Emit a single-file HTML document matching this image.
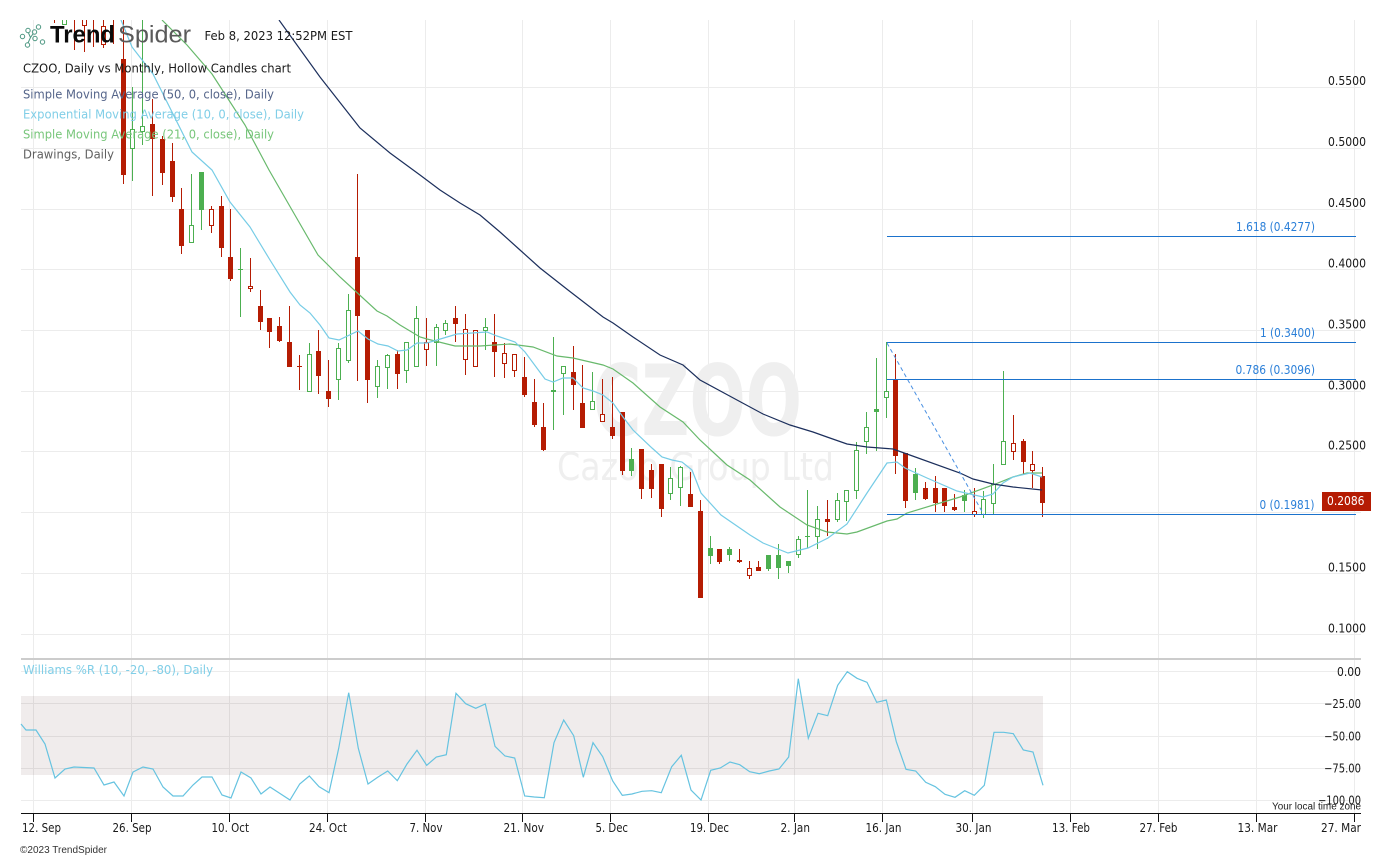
<!DOCTYPE html>
<html><head><meta charset="utf-8"><title>CZOO chart</title>
<style>
html,body{margin:0;padding:0;background:#fff;width:1391px;height:859px;overflow:hidden}
svg{display:block}
text{font-family:"DejaVu Sans","Liberation Sans",sans-serif;font-size:12px}
.ax{fill:#1a1a1a}
.fib{fill:#2a7fd8}
.ls{font-family:"Liberation Sans",sans-serif}
</style></head><body>
<svg width="1391" height="859" viewBox="0 0 1391 859" xmlns="http://www.w3.org/2000/svg">
<defs><clipPath id="c"><rect x="21" y="20" width="1340" height="638"/></clipPath></defs>
<rect width="1391" height="859" fill="#fff"/>
<!-- zone -->
<rect x="21" y="696" width="1022" height="79" fill="#f0ecec"/>
<!-- grid -->
<path fill="none" stroke="#000" stroke-opacity=".075" stroke-width="1" shape-rendering="crispEdges" d="M21 87.5H1361M21 148.5H1361M21 209.5H1361M21 269.5H1361M21 330.5H1361M21 391.5H1361M21 451.5H1361M21 512.5H1361M21 573.5H1361M21 634.5H1361M21 671.5H1361M21 703.5H1361M21 736.5H1361M21 768.5H1361M21 800.5H1361M33.5 20V813M131.5 20V813M229.5 20V813M327.5 20V813M425.5 20V813M522.5 20V813M610.5 20V813M708.5 20V813M794.5 20V813M882.5 20V813M972.5 20V813M1070.5 20V813M1158.5 20V813M1256.5 20V813M1354.5 20V813"/>
<rect x="21" y="658" width="1340" height="2" fill="#ccc"/>
<!-- watermark -->
<text x="593" y="435" fill="#efefef" style="font-size:98px;font-weight:700" textLength="209" lengthAdjust="spacingAndGlyphs">CZOO</text>
<text x="557" y="480" fill="#efefef" style="font-size:38px" textLength="277" lengthAdjust="spacingAndGlyphs">Cazoo Group Ltd</text>
<g clip-path="url(#c)">
<!-- red wicks -->
<path fill="none" stroke="#b51c03" stroke-width="1" shape-rendering="crispEdges" d="M54.5 20V23M74.5 20V50M84.5 20V52M93.5 20V47M103.5 20V48M113.5 20V44M123.5 20V184M152.5 99V196M162.5 136V185M172.5 143V202M181.5 188V254M211.5 206V233M221.5 196V257M230.5 209V281M250.5 258V292M260.5 290V330M269.5 318V348M279.5 317V342M289.5 306V367M299.5 355V390M318.5 330V394M328.5 360V407M357.5 174V381M367.5 330V403M397.5 350V389M426.5 318V366M455.5 306V342M465.5 314V375M494.5 314V377M504.5 343V378M514.5 354V377M524.5 357V397M534.5 379V427M543.5 403V451M573.5 346V410M582.5 365V428M602.5 379V421M612.5 377V439M622.5 412V475M641.5 449V499M651.5 464V498M661.5 464V517M690.5 472V507M700.5 500V598M719.5 549V564M739.5 549V563M749.5 561V579M758.5 561V571M827.5 500V536M895.5 354V474M905.5 453V508M925.5 482V500M935.5 476V512M944.5 488V512M954.5 494V511M974.5 488V517M1013.5 415V460M1023.5 439V474M1032.5 451V488M1042.5 467V517"/>
<!-- green wicks -->
<path fill="none" stroke="#4caf50" stroke-width="1" shape-rendering="crispEdges" d="M64.5 20V25M132.5 87V181M142.5 20V145M191.5 174V242M201.5 172V230M240.5 248V317M309.5 343V391M338.5 343V400M348.5 294V363M377.5 360V398M387.5 354V389M406.5 342V383M416.5 306V366M436.5 324V366M445.5 320V335M485.5 318V350M553.5 337V430M563.5 366V415M592.5 372V409M631.5 448V476M670.5 467V500M680.5 466V506M710.5 536V564M729.5 547V561M768.5 555V571M778.5 544V579M788.5 561V573M798.5 536V558M807.5 490V548M817.5 506V549M837.5 493V522M846.5 490V521M856.5 442V499M866.5 412V454M876.5 358V451M886.5 342V418M915.5 468V500M964.5 490V512M983.5 491V518M993.5 464V514M1003.5 371V464"/>
<!-- red filled -->
<path fill="#b51c03" shape-rendering="crispEdges" d="M121 59h5v116h-5zM150 124h5v15h-5zM160 139h5v34h-5zM170 161h5v36h-5zM179 209h5v37h-5zM219 206h5v42h-5zM228 257h5v22h-5zM258 306h5v16h-5zM267 318h5v14h-5zM277 326h5v15h-5zM287 342h5v25h-5zM297 366h5v1h-5zM316 351h5v25h-5zM326 391h5v8h-5zM355 257h5v59h-5zM365 330h5v50h-5zM395 354h5v20h-5zM453 318h5v6h-5zM492 342h5v10h-5zM522 377h5v18h-5zM532 402h5v23h-5zM541 427h5v23h-5zM571 372h5v13h-5zM580 403h5v25h-5zM610 427h5v9h-5zM620 412h5v59h-5zM639 449h5v40h-5zM649 470h5v19h-5zM659 464h5v45h-5zM688 494h5v13h-5zM698 511h5v87h-5zM717 549h5v13h-5zM737 560h5v2h-5zM756 567h5v4h-5zM825 519h5v3h-5zM893 379h5v77h-5zM903 453h5v48h-5zM923 488h5v11h-5zM933 488h5v15h-5zM942 488h5v18h-5zM952 507h5v3h-5zM1021 441h5v21h-5zM1040 476h5v27h-5z"/>
<!-- green filled -->
<path fill="#4caf50" shape-rendering="crispEdges" d="M199 172h5v38h-5zM238 269h5v1h-5zM551 390h5v2h-5zM629 459h5v12h-5zM708 548h5v8h-5zM727 549h5v6h-5zM766 555h5v14h-5zM776 555h5v13h-5zM786 561h5v5h-5zM805 536h5v1h-5zM874 409h5v3h-5zM913 474h5v19h-5zM962 495h5v6h-5z"/>
<!-- red hollow -->
<path fill="#fff" stroke="#b51c03" stroke-width="1" shape-rendering="crispEdges" d="M82.5 19.5h4v6h-4zM101.5 26.5h4v18h-4zM209.5 209.5h4v16h-4zM248.5 286.5h4v2h-4zM424.5 342.5h4v7h-4zM463.5 329.5h4v30h-4zM473.5 330.5h4v36h-4zM502.5 353.5h4v10h-4zM512.5 354.5h4v16h-4zM600.5 414.5h4v7h-4zM747.5 568.5h4v7h-4zM972.5 511.5h4v3h-4zM1011.5 443.5h4v8h-4zM1030.5 464.5h4v6h-4z"/>
<!-- green hollow -->
<path fill="#fff" stroke="#4caf50" stroke-width="1" shape-rendering="crispEdges" d="M62.5 19.5h4v5h-4zM130.5 129.5h4v19h-4zM140.5 126.5h4v5h-4zM189.5 225.5h4v17h-4zM307.5 354.5h4v37h-4zM336.5 348.5h4v31h-4zM346.5 310.5h4v50h-4zM375.5 366.5h4v20h-4zM385.5 355.5h4v12h-4zM404.5 342.5h4v28h-4zM414.5 318.5h4v48h-4zM434.5 327.5h4v15h-4zM443.5 323.5h4v7h-4zM483.5 327.5h4v3h-4zM561.5 366.5h4v7h-4zM590.5 401.5h4v8h-4zM668.5 478.5h4v15h-4zM678.5 467.5h4v20h-4zM796.5 539.5h4v15h-4zM815.5 519.5h4v17h-4zM835.5 500.5h4v19h-4zM844.5 490.5h4v11h-4zM854.5 450.5h4v40h-4zM864.5 427.5h4v14h-4zM884.5 391.5h4v6h-4zM981.5 499.5h4v15h-4zM991.5 484.5h4v19h-4zM1001.5 441.5h4v23h-4z"/>
<!-- SMA 21 -->
<polyline fill="none" stroke="#68b96c" stroke-width="1.2" points="162,20 187,45 212,74 245,125 269,170 292,210 318,255 340,277 377,311 387,316 400,325 420,337 427,339 455,346 480,346 510,344 533,347 557,356 573,358 603,365 613,369 633,383 660,407 683,422 700,440 727,465 750,480 780,507 807,525 827,532 847,534 857,532 887,521 897,519 907,513 960,497 993,485 1013,477 1027,473 1042,473"/>
<!-- EMA 10 -->
<polyline fill="none" stroke="#76cce6" stroke-width="1.2" points="121,20 132,47 153,74 192,152 212,170 230,202 250,227 270,260 290,292 300,305 310,313 320,325 329,338 339,340 358,331 368,339 378,344 388,346 398,351 407,350 417,343 427,343 437,340 457,334 487,332 497,336 515,342 525,352 545,379 553,382 563,378 573,378 583,388 593,391 603,395 613,403 623,417 633,430 652,448 662,457 672,460 682,462 692,470 701,493 721,515 750,535 763,543 788,553 808,548 828,538 847,524 867,493 887,463 897,462 905,468 927,478 957,491 983,497 993,494 1003,483 1013,477 1030,473 1042,477"/>
<!-- SMA 50 -->
<polyline fill="none" stroke="#1c2f5c" stroke-width="1.2" points="279,20 320,77 360,128 390,153 420,175 440,190 460,203 480,215 500,232 520,250 540,268 568,290 603,317 613,323 633,337 660,355 683,365 700,380 737,400 763,414 790,425 813,432 827,437 847,444 867,447 893,449 907,454 960,473 973,479 993,484 1013,487 1042,490"/>
<!-- fib -->
<path fill="none" stroke="#1b72cc" stroke-width="1" shape-rendering="crispEdges" d="M887 236.5H1356M887 342.5H1356M887 379.5H1356M887 514.5H1356"/>
<line x1="887" y1="343" x2="984" y2="515" stroke="#4a90e2" stroke-width="1" stroke-dasharray="4 3"/>
</g>
<!-- williams -->
<polyline fill="none" stroke="#66c3e0" stroke-width="1.2" points="21,724 26,730 36,730 45,744 55,778 65,769 74,767 94,768 104,785 114,782 124,796 133,772 143,767 153,769 163,787 173,796 183,796 193,785 202,777 212,777 222,795 231,798 241,772 251,778 261,794 270,787 290,800 299.7,784 309.3,776 319,786.7 329,792.7 338.7,748.3 348.7,692.7 358.3,748.3 368,784 377.7,777.3 387.7,771 397.3,780.7 407,764 417,750.3 426.7,765.3 436.3,757 446.3,754.7 456,693.3 465.7,703.7 475.7,708.3 485.3,704 495,746.3 505,756 514.7,758 524.7,796 534.3,797 544.3,797.7 554,742.7 563.7,720 573.7,735.7 583.3,777.3 593,742.7 602.7,756.7 612.7,781 622.3,795.3 632,794 642,791.3 651.7,790.7 661.3,792.7 671.7,766.7 681.3,755.3 691,790 701,800 710.7,770.3 720.3,768 730,762 739.7,764.7 749.7,771.7 759.3,773.7 769.3,771 779,769 788.7,757 798.3,678.7 808.3,738.3 818,713.3 827.7,715.7 837.7,685.3 847.3,671.7 857,678.3 867,682.3 876.7,702.3 886.3,700 896.3,741.7 906,769.3 915.7,771 925.7,782.3 935.3,786.7 945,794.3 955,797.3 964.7,790.7 974.3,795.3 984.3,785.3 994,732.3 1003.7,732.3 1013.3,733.7 1023.3,750 1033,752 1043,785.3"/>
<!-- axis -->
<path fill="none" stroke="#111" stroke-width="1" shape-rendering="crispEdges" d="M21 813.5H1361M33.5 813V822M131.5 813V822M229.5 813V822M327.5 813V822M425.5 813V822M522.5 813V822M610.5 813V822M708.5 813V822M794.5 813V822M882.5 813V822M972.5 813V822M1070.5 813V822M1158.5 813V822M1256.5 813V822M1354.5 813V822"/>
<!-- logo -->
<g fill="none" stroke="#4b9680" stroke-width="1">
<circle cx="22.5" cy="36.5" r="2.2"/><circle cx="28" cy="30.5" r="2.2"/><circle cx="34.5" cy="32" r="2.2"/><circle cx="38.5" cy="27" r="2.2"/><circle cx="35" cy="38.5" r="2.2"/><circle cx="42.5" cy="42" r="2.2"/><circle cx="27.5" cy="45" r="2.2"/>
<path d="M28.5 33L30.5 37.5L28 43M30.5 37.5L33 33.8"/>
</g>
<text x="50" y="42.5" fill="#0a0a0a" style="font-size:24px;font-weight:700;font-family:'Liberation Sans',sans-serif" textLength="65" lengthAdjust="spacingAndGlyphs">Trend</text>
<text x="118" y="42.5" fill="#5a5a5a" style="font-size:24px;font-family:'Liberation Sans',sans-serif" textLength="73" lengthAdjust="spacingAndGlyphs">Spider</text>
<text x="204.5" y="40" fill="#1a1a1a" textLength="148" lengthAdjust="spacingAndGlyphs">Feb 8, 2023 12:52PM EST</text>
<!-- legend -->
<text x="23" y="72.5" fill="#1a1a1a" textLength="268" lengthAdjust="spacingAndGlyphs">CZOO, Daily vs Monthly, Hollow Candles chart</text>
<text x="23" y="98.5" fill="#55658a" textLength="251" lengthAdjust="spacingAndGlyphs">Simple Moving Average (50, 0, close), Daily</text>
<text x="23" y="118.5" fill="#80cee7" textLength="281" lengthAdjust="spacingAndGlyphs">Exponential Moving Average (10, 0, close), Daily</text>
<text x="23" y="138.5" fill="#78c67b" textLength="251" lengthAdjust="spacingAndGlyphs">Simple Moving Average (21, 0, close), Daily</text>
<text x="23" y="158.5" fill="#606060" textLength="91" lengthAdjust="spacingAndGlyphs">Drawings, Daily</text>
<text x="23" y="674" fill="#80cee7" textLength="190" lengthAdjust="spacingAndGlyphs">Williams %R (10, -20, -80), Daily</text>
<!-- y axis -->
<text class="ax" x="1328" y="85" textLength="38" lengthAdjust="spacingAndGlyphs">0.5500</text>
<text class="ax" x="1328" y="146" textLength="38" lengthAdjust="spacingAndGlyphs">0.5000</text>
<text class="ax" x="1328" y="207" textLength="38" lengthAdjust="spacingAndGlyphs">0.4500</text>
<text class="ax" x="1328" y="267.5" textLength="38" lengthAdjust="spacingAndGlyphs">0.4000</text>
<text class="ax" x="1328" y="328.5" textLength="38" lengthAdjust="spacingAndGlyphs">0.3500</text>
<text class="ax" x="1328" y="389.5" textLength="38" lengthAdjust="spacingAndGlyphs">0.3000</text>
<text class="ax" x="1328" y="449.5" textLength="38" lengthAdjust="spacingAndGlyphs">0.2500</text>
<text class="ax" x="1328" y="571.5" textLength="38" lengthAdjust="spacingAndGlyphs">0.1500</text>
<text class="ax" x="1328" y="632.5" textLength="38" lengthAdjust="spacingAndGlyphs">0.1000</text>
<text class="ax" x="1337" y="676" textLength="24" lengthAdjust="spacingAndGlyphs">0.00</text>
<text class="ax" x="1324" y="708" textLength="37" lengthAdjust="spacingAndGlyphs">−25.00</text>
<text class="ax" x="1324" y="740.5" textLength="37" lengthAdjust="spacingAndGlyphs">−50.00</text>
<text class="ax" x="1324" y="772.5" textLength="37" lengthAdjust="spacingAndGlyphs">−75.00</text>
<text class="ax" x="1318" y="804.5" textLength="43" lengthAdjust="spacingAndGlyphs">−100.00</text>
<!-- fib labels -->
<text class="fib" x="1236" y="231" textLength="79" lengthAdjust="spacingAndGlyphs">1.618 (0.4277)</text>
<text class="fib" x="1260" y="337" textLength="55" lengthAdjust="spacingAndGlyphs">1 (0.3400)</text>
<text class="fib" x="1235.5" y="374" textLength="79.5" lengthAdjust="spacingAndGlyphs">0.786 (0.3096)</text>
<text class="fib" x="1259.5" y="509" textLength="55" lengthAdjust="spacingAndGlyphs">0 (0.1981)</text>
<!-- price tag -->
<rect x="1322" y="492" width="49" height="19" fill="#b51c03"/>
<text x="1327" y="505" fill="#fff" textLength="37.5" lengthAdjust="spacingAndGlyphs">0.2086</text>
<!-- x labels -->
<text class="ax" x="22" y="832" textLength="39" lengthAdjust="spacingAndGlyphs">12. Sep</text>
<text class="ax" x="112.5" y="832" textLength="39" lengthAdjust="spacingAndGlyphs">26. Sep</text>
<text class="ax" x="211.5" y="832" textLength="37.5" lengthAdjust="spacingAndGlyphs">10. Oct</text>
<text class="ax" x="309" y="832" textLength="38" lengthAdjust="spacingAndGlyphs">24. Oct</text>
<text class="ax" x="409.5" y="832" textLength="33" lengthAdjust="spacingAndGlyphs">7. Nov</text>
<text class="ax" x="503.5" y="832" textLength="40.5" lengthAdjust="spacingAndGlyphs">21. Nov</text>
<text class="ax" x="595.5" y="832" textLength="32.5" lengthAdjust="spacingAndGlyphs">5. Dec</text>
<text class="ax" x="690" y="832" textLength="39" lengthAdjust="spacingAndGlyphs">19. Dec</text>
<text class="ax" x="780.5" y="832" textLength="29.5" lengthAdjust="spacingAndGlyphs">2. Jan</text>
<text class="ax" x="865.5" y="832" textLength="36" lengthAdjust="spacingAndGlyphs">16. Jan</text>
<text class="ax" x="955.5" y="832" textLength="36" lengthAdjust="spacingAndGlyphs">30. Jan</text>
<text class="ax" x="1052" y="832" textLength="38" lengthAdjust="spacingAndGlyphs">13. Feb</text>
<text class="ax" x="1139.5" y="832" textLength="38" lengthAdjust="spacingAndGlyphs">27. Feb</text>
<text class="ax" x="1237.5" y="832" textLength="40" lengthAdjust="spacingAndGlyphs">13. Mar</text>
<text class="ax" x="1321" y="832" textLength="40" lengthAdjust="spacingAndGlyphs">27. Mar</text>
<text x="1272" y="809.5" fill="#222" style="font-family:'Liberation Sans',sans-serif;font-size:10px" textLength="89" lengthAdjust="spacingAndGlyphs">Your local time zone</text>
<text x="20" y="853" fill="#333" style="font-family:'Liberation Sans',sans-serif;font-size:10px" textLength="87" lengthAdjust="spacingAndGlyphs">©2023 TrendSpider</text>
</svg>
</body></html>
